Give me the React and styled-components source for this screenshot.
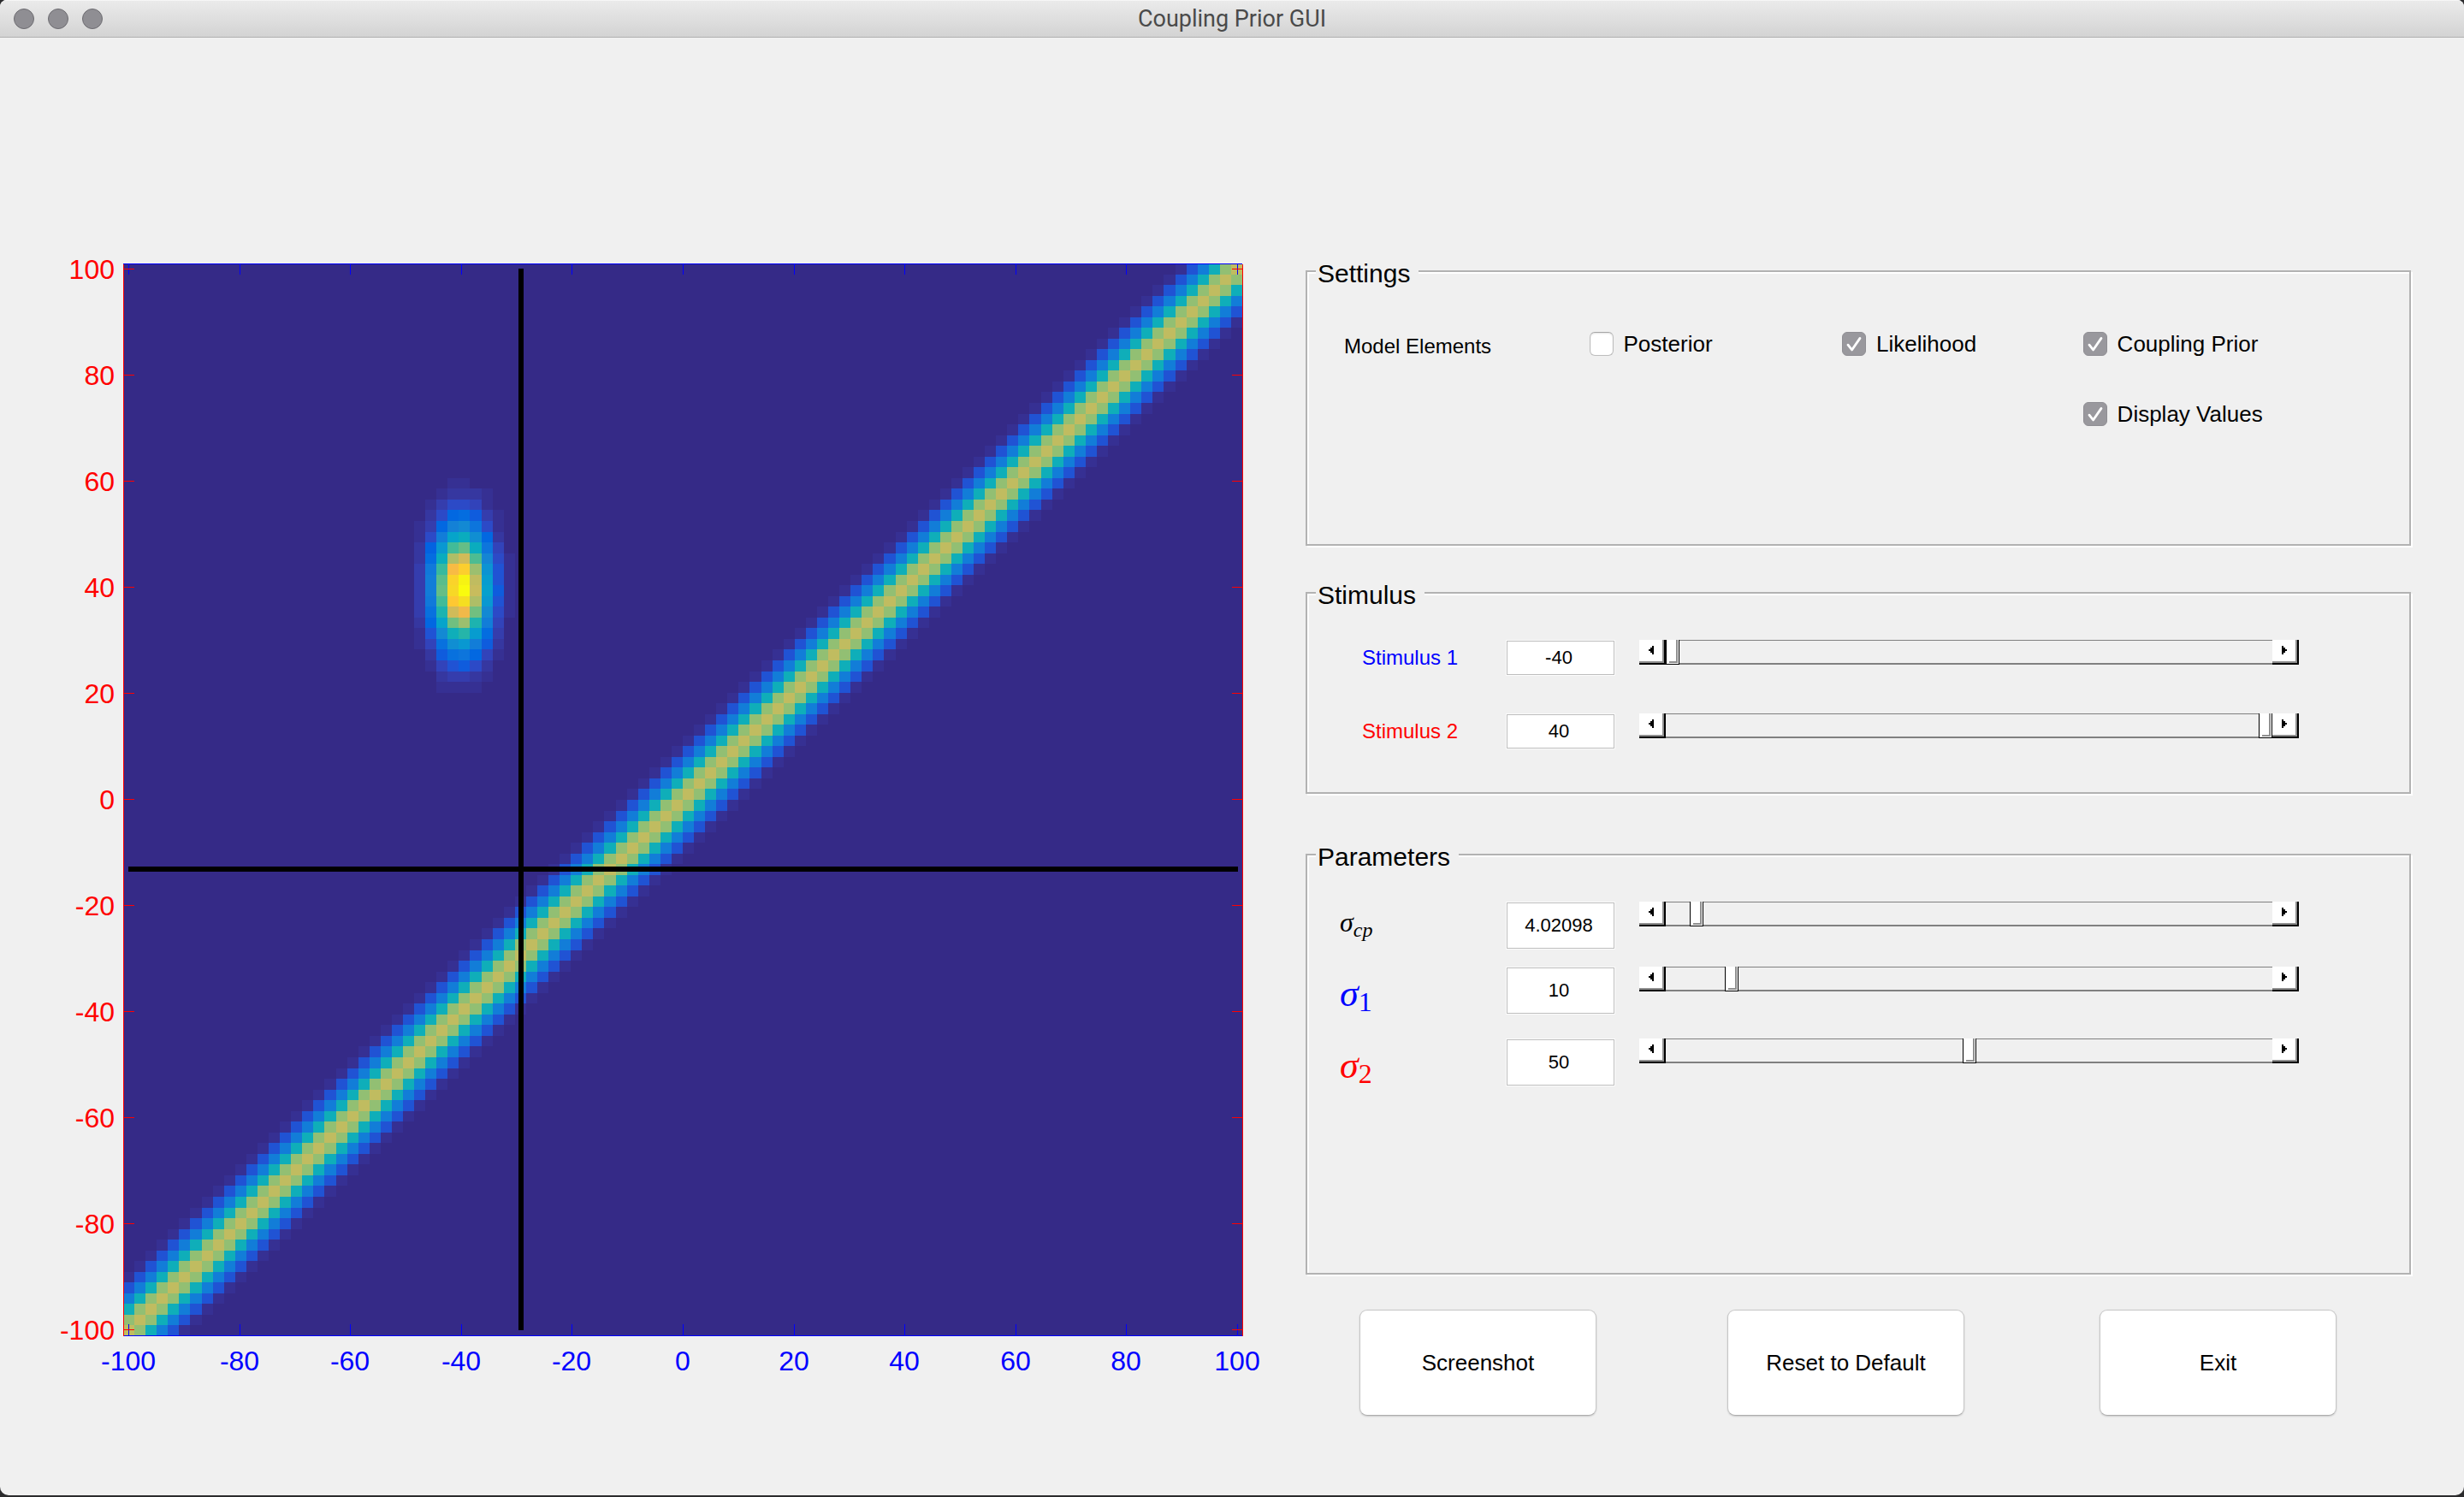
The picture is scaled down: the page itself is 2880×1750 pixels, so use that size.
import React, { useMemo, useState } from "react";
import styled, { createGlobalStyle } from "styled-components";

const SANS = '"Liberation Sans", Arial, Helvetica, sans-serif';
const SERIF = '"Liberation Serif", "Times New Roman", serif';
const SURFACE = "#f0f0f0";

const GlobalStyle = createGlobalStyle`
  *, *::before, *::after { box-sizing: border-box; }
  body { margin: 0; background: #2b2b2d; font-family: ${SANS}; color: #000; }
`;

/* ---------- window ---------- */

const Window = styled.div`
  display: flex;
  flex-direction: column;
  min-height: calc(100vh - 2px);
  background: ${SURFACE};
  border-radius: 8px 8px 10px 10px;
  overflow: hidden;
`;

const TitleBar = styled.header`
  display: grid;
  grid-template-columns: 1fr auto 1fr;
  align-items: center;
  height: 44px;
  padding: 0 16px;
  background: linear-gradient(#ebebeb, #d3d3d3);
  border-bottom: 1px solid #b0b0b0;
  box-shadow: inset 0 1px 0 #f6f6f6;
`;

const Lights = styled.div`
  display: flex;
  gap: 16px;
`;

const Light = styled.button`
  width: 24px;
  height: 24px;
  padding: 0;
  border: 1px solid #6d6c71;
  border-radius: 50%;
  background: #8f8e93;
`;

const Title = styled.h1`
  margin: 0;
  font: 400 27px/34px Roboto, sans-serif;
  color: #4a4a4a;
`;

const Body = styled.main`
  display: grid;
  grid-template-columns: 355fr 323fr;
  column-gap: 46px;
  align-items: start;
  padding: 253px 62px 64px 60px;
`;

/* ---------- chart ---------- */

const Chart = styled.svg`
  display: block;
  width: 100%;
  height: auto;
`;

const TickLabel = styled.text`
  font: 32px ${SANS};
  fill: ${(p) => p.$color};
  text-anchor: ${(p) => p.$anchor};
`;

/* ---------- panels ---------- */

const Group = styled.fieldset`
  min-width: 0;
  min-height: ${(p) => p.$height}px;
  margin: 0 0 ${(p) => p.$after}px;
  padding: 0;
  border: 2px solid #b2b2b2;
  box-shadow: 2px 2px 0 #fff, inset 2px 2px 0 #fff;
`;

const Legend = styled.legend`
  margin-left: 10px;
  padding: 6px 10px 0 2px;
  background: ${SURFACE};
  font-size: 30px;
  line-height: 34px;
`;

const Elements = styled.div`
  display: grid;
  grid-template-columns: 287fr 296fr 282fr 382fr;
  row-gap: 48px;
  align-items: start;
  padding: 51px 0 0 43px;
`;

const Caption = styled.span`
  font-size: 24px;
  line-height: 34px;
`;

const CheckLabel = styled.label`
  display: flex;
  gap: 12px;
  grid-column: ${(p) => p.$column};
  font-size: 26px;
  line-height: 28px;
  white-space: nowrap;
`;

const CheckBox = styled.span`
  display: grid;
  width: 28px;
  height: 28px;
  > * { grid-area: 1 / 1; }
  svg { visibility: hidden; pointer-events: none; }
  input:checked + svg { visibility: visible; }
`;

const CheckInput = styled.input`
  appearance: none;
  width: 28px;
  height: 28px;
  margin: 0;
  border: 1px solid #bdbdbd;
  border-top-color: #a6a6a6;
  border-radius: 6px;
  background: #fff;
  box-shadow: inset 0 1px 2px rgba(0, 0, 0, 0.12);
  &:checked {
    background: #99989d;
    border-color: #8f8e93;
    box-shadow: none;
  }
`;

const Rows = styled.div`
  display: grid;
  grid-template-rows: ${(p) => p.$rows};
  padding: 35px 129px 0 0;
`;

const Row = styled.div`
  display: grid;
  grid-template-columns: 232px 156px minmax(0, 1fr);
  align-items: start;
`;

const StimulusLabel = styled.label`
  padding-left: 64px;
  font-size: 24px;
  line-height: 42px;
  color: ${(p) => p.$color};
`;

const SymbolLabel = styled.label`
  padding-left: 38px;
  font: italic ${(p) => (p.$small ? "32px/48px" : "44px/64px")} ${SERIF};
  color: ${(p) => p.$color};
  sub {
    font-size: ${(p) => (p.$small ? 24 : 32)}px;
    font-style: ${(p) => (p.$small ? "italic" : "normal")};
    line-height: 0;
    vertical-align: -6px;
  }
`;

const Field = styled.input`
  width: 128px;
  height: ${(p) => p.$height}px;
  padding: 0 4px 0 0;
  border: 1px solid #fbfbfb;
  outline: 1px solid #bebebe;
  outline-offset: -2px;
  background: #fff;
  font: 22px ${SANS};
  text-align: center;
`;

const Scroll = styled.div`
  display: grid;
  grid-template-columns: 31px minmax(0, 1fr) 31px;
  height: 29px;
`;

const ArrowButton = styled.button`
  display: flex;
  align-items: center;
  justify-content: center;
  padding: 0 2px 3px 0;
  border: solid #000;
  border-width: 0 2px 2px 0;
  background: #fff;
  box-shadow: inset -2px -2px 0 #8e8e8e;
`;

const Range = styled.input`
  appearance: none;
  width: 100%;
  height: 29px;
  margin: 0;
  background:
    linear-gradient(#808080, #808080) top / 100% 1px no-repeat,
    linear-gradient(#808080, #808080) bottom / 100% 2px no-repeat,
    ${SURFACE};
  &::-webkit-slider-thumb {
    appearance: none;
    box-sizing: border-box;
    width: 16px;
    height: 29px;
    border: solid #000;
    border-width: 0 1px 1px;
    background:
      linear-gradient(#909090, #909090) right 1px top 0 / 2px 27px no-repeat,
      linear-gradient(#909090, #909090) right 1px bottom 1px / 10px 2px no-repeat,
      #fff;
  }
`;

const Actions = styled.div`
  display: grid;
  grid-template-columns: 430fr 435fr 364fr;
  padding: 41px 0 0 63px;
`;

const ActionButton = styled.button`
  width: 277px;
  height: 124px;
  border: 1px solid #c6c6c6;
  border-bottom-color: #adadad;
  border-radius: 9px;
  background: #fff;
  box-shadow: 0 1px 2px rgba(0, 0, 0, 0.16);
  font: 26px ${SANS};
  color: #000;
`;

/* ---------- heat map ---------- */

const PARULA = (
  "352A87 363093 3637A0 353DAD 3243BA 2C4AC7 2053D4 0F5CDD 0363E1 0268E1 046DE0 0871DE 0D75DC " +
  "1079DA 127DD8 1481D6 1485D4 1389D3 108ED2 0C93D2 0998D1 079CCF 06A0CD 06A4CA 06A7C6 07A9C2 " +
  "0AACBE 0FAEB9 15B1B4 1DB3AF 25B5A9 2EB7A4 38B99E 42BB98 4DBC92 59BD8C 65BE86 71BF80 7CBF7B " +
  "87BF77 92BF73 9CBF6F A5BE6B AEBE67 B7BD64 C0BC60 C8BC5D D1BB59 D9BA56 E1B952 E9B94E F1B94A " +
  "F8BB44 FDBE3D FFC337 FEC832 FCCE2E FAD32A F7D826 F5DE21 F5E41D F5EB18 F6F313 F9FB0E"
).split(" ");

const CELLS = 100;
const PLOT = { left: 84, top: 11, width: 1308, height: 1254 };
const TICKS = [-100, -80, -60, -40, -20, 0, 20, 40, 60, 80, 100];
const toX = (v) => Math.round(738 + v * 6.48);
const toY = (v) => Math.round(637 - v * 6.2);

function buildCells({ s1, s2, cp, v1, v2 }, show) {
  const coord = (i) => -100 + (200 * i) / (CELLS - 1);
  const raw = [];
  let peak = 0;
  for (let r = 0; r < CELLS; r++) {
    for (let c = 0; c < CELLS; c++) {
      const x = coord(c);
      const y = -coord(r);
      const like = show.likelihood
        ? Math.exp(-((x - s1) ** 2) / (2 * v1) - ((y - s2) ** 2) / (2 * v2))
        : 0;
      peak = Math.max(peak, like);
      raw.push([r, c, like, show.prior ? 0.712 * Math.exp(-((x - y) ** 2) / (2 * cp * cp)) : 0]);
    }
  }
  const cells = [];
  for (const [r, c, like, prior] of raw) {
    const level = Math.min(63, Math.floor((peak ? (like / peak) * 63.9 : 0) + prior * 64));
    if (level < 1) continue;
    const x0 = Math.round(PLOT.left + (c * PLOT.width) / CELLS);
    const x1 = Math.round(PLOT.left + ((c + 1) * PLOT.width) / CELLS);
    const y0 = Math.round(PLOT.top + (r * PLOT.height) / CELLS);
    const y1 = Math.round(PLOT.top + ((r + 1) * PLOT.height) / CELLS);
    cells.push(
      <rect key={`${r}-${c}`} x={x0} y={y0} width={x1 - x0} height={y1 - y0} fill={`#${PARULA[level]}`} />
    );
  }
  return cells;
}

function HeatMap({ model, show }) {
  const cells = useMemo(() => buildCells(model, show), [model, show]);
  const right = PLOT.left + PLOT.width;
  const bottom = PLOT.top + PLOT.height;
  return (
    <Chart viewBox="0 0 1420 1323" role="img" aria-label="Likelihood and coupling prior">
      <g shapeRendering="crispEdges">
        <rect x={PLOT.left} y={PLOT.top} width={PLOT.width} height={PLOT.height} fill="#352A87" />
        {cells}
        <g fill="#0000ff">
          <rect x={PLOT.left} y={PLOT.top} width={PLOT.width} height="1" />
          <rect x={PLOT.left} y={bottom - 1} width={PLOT.width} height="1" />
          {TICKS.map((t) => (
            <g key={t}>
              <rect x={toX(t)} y={PLOT.top} width="1" height="13" />
              <rect x={toX(t)} y={bottom - 14} width="1" height="13" />
            </g>
          ))}
        </g>
        <g fill="#ff0000">
          <rect x={PLOT.left} y={PLOT.top + 1} width="1" height={PLOT.height - 1} />
          <rect x={right} y={PLOT.top + 1} width="1" height={PLOT.height - 1} />
          {TICKS.map((t) => (
            <g key={t}>
              <rect x={PLOT.left} y={toY(t)} width="13" height="1" />
              <rect x={right - 12} y={toY(t)} width="13" height="1" />
            </g>
          ))}
        </g>
        <rect x="546" y={toY(100)} width="6" height="1241" />
        <rect x={toX(-100)} y="716" width="1297" height="6" />
      </g>
      {TICKS.map((t) => (
        <g key={t}>
          <TickLabel $color="#ff0000" $anchor="end" x="74" y={toY(t) + 12}>{t}</TickLabel>
          <TickLabel $color="#0000ff" $anchor="middle" x={toX(t)} y="1305">{t}</TickLabel>
        </g>
      ))}
    </Chart>
  );
}

/* ---------- controls ---------- */

function Check({ column, label, checked, onChange }) {
  return (
    <CheckLabel $column={column}>
      <CheckBox>
        <CheckInput type="checkbox" checked={checked} onChange={(e) => onChange(e.target.checked)} />
        <svg width="28" height="28" viewBox="0 0 28 28" fill="none" aria-hidden="true">
          <path d="M7 15.2 11.6 21 21 7.4" stroke="#fff" strokeWidth="2.8" strokeLinecap="round" strokeLinejoin="round" />
        </svg>
      </CheckBox>
      {label}
    </CheckLabel>
  );
}

function Arrow({ right }) {
  return (
    <svg width="6" height="10" viewBox="0 0 6 10" shapeRendering="crispEdges" aria-hidden="true">
      <path d={right ? "M0 0H2V2H4V4H6V6H4V8H2V10H0Z" : "M6 0H4V2H2V4H0V6H2V8H4V10H6Z"} />
    </svg>
  );
}

function Control({ id, name, label, height, min, max, value, onChange }) {
  const set = (v) => onChange(Math.min(max, Math.max(min, Number(v) || 0)));
  return (
    <Row>
      {label}
      <Field id={id} $height={height} value={value} onChange={(e) => set(e.target.value)} />
      <Scroll>
        <ArrowButton type="button" aria-label={`Decrease ${name}`} onClick={() => set(value - 1)}>
          <Arrow />
        </ArrowButton>
        <Range
          type="range"
          aria-label={name}
          min={min}
          max={max}
          step="any"
          value={value}
          onChange={(e) => set(e.target.value)}
        />
        <ArrowButton type="button" aria-label={`Increase ${name}`} onClick={() => set(value + 1)}>
          <Arrow right />
        </ArrowButton>
      </Scroll>
    </Row>
  );
}

const DEFAULT_MODEL = { s1: -40, s2: 40, cp: 4.02098, v1: 10, v2: 50 };
const DEFAULT_SHOW = { posterior: false, likelihood: true, prior: true, values: true };

export default function App() {
  const [model, setModel] = useState(DEFAULT_MODEL);
  const [show, setShow] = useState(DEFAULT_SHOW);
  const bind = (key) => ({
    id: key,
    value: model[key],
    onChange: (v) => setModel((m) => ({ ...m, [key]: v })),
  });
  const toggle = (key) => ({
    checked: show[key],
    onChange: (v) => setShow((s) => ({ ...s, [key]: v })),
  });
  const reset = () => {
    setModel(DEFAULT_MODEL);
    setShow(DEFAULT_SHOW);
  };

  return (
    <>
      <GlobalStyle />
      <Window>
        <TitleBar>
          <Lights>
            <Light type="button" aria-label="Close" />
            <Light type="button" aria-label="Minimize" />
            <Light type="button" aria-label="Zoom" />
          </Lights>
          <Title>Coupling Prior GUI</Title>
        </TitleBar>
        <Body>
          <HeatMap model={model} show={show} />
          <div>
            <Group $height={341} $after={35}>
              <Legend>Settings</Legend>
              <Elements>
                <Caption>Model Elements</Caption>
                <Check column={2} label="Posterior" {...toggle("posterior")} />
                <Check column={3} label="Likelihood" {...toggle("likelihood")} />
                <Check column={4} label="Coupling Prior" {...toggle("prior")} />
                <Check column={4} label="Display Values" {...toggle("values")} />
              </Elements>
            </Group>

            <Group $height={255} $after={51}>
              <Legend>Stimulus</Legend>
              <Rows $rows="86px 42px">
                <Control
                  {...bind("s1")}
                  name="Stimulus 1"
                  height={42}
                  min={-40}
                  max={40}
                  label={<StimulusLabel htmlFor="s1" $color="#0000ff">Stimulus 1</StimulusLabel>}
                />
                <Control
                  {...bind("s2")}
                  name="Stimulus 2"
                  height={42}
                  min={-40}
                  max={40}
                  label={<StimulusLabel htmlFor="s2" $color="#ff0000">Stimulus 2</StimulusLabel>}
                />
              </Rows>
            </Group>

            <Group $height={511} $after={0}>
              <Legend>Parameters</Legend>
              <Rows $rows="76px 84px 56px">
                <Control
                  {...bind("cp")}
                  name="Sigma cp"
                  height={56}
                  min={0}
                  max={100}
                  label={<SymbolLabel htmlFor="cp" $small $color="#000">σ<sub>cp</sub></SymbolLabel>}
                />
                <Control
                  {...bind("v1")}
                  name="Sigma 1"
                  height={56}
                  min={0}
                  max={100}
                  label={<SymbolLabel htmlFor="v1" $color="#0000ff">σ<sub>1</sub></SymbolLabel>}
                />
                <Control
                  {...bind("v2")}
                  name="Sigma 2"
                  height={56}
                  min={0}
                  max={100}
                  label={<SymbolLabel htmlFor="v2" $color="#ff0000">σ<sub>2</sub></SymbolLabel>}
                />
              </Rows>
            </Group>

            <Actions>
              <ActionButton type="button">Screenshot</ActionButton>
              <ActionButton type="button" onClick={reset}>Reset to Default</ActionButton>
              <ActionButton type="button">Exit</ActionButton>
            </Actions>
          </div>
        </Body>
      </Window>
    </>
  );
}
